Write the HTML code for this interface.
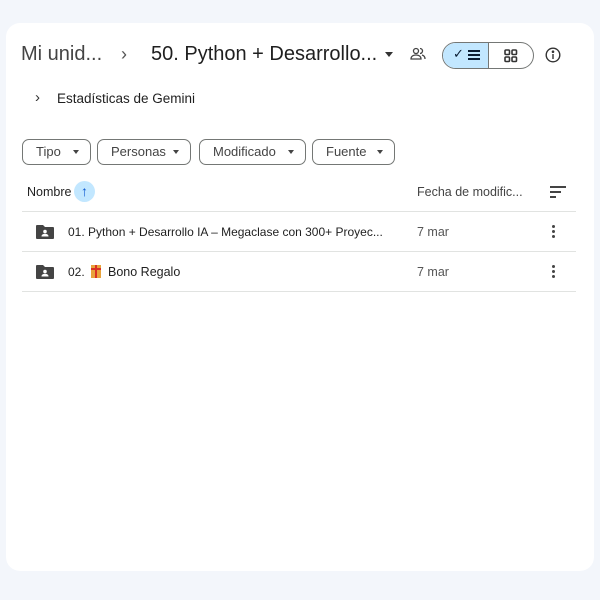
<!DOCTYPE html>
<html><head><style>
*{margin:0;padding:0;box-sizing:border-box}
body{width:600px;height:600px;background:#f3f6fb;font-family:"Liberation Sans",sans-serif;color:#1f1f1f;position:relative;overflow:hidden}
.card{position:absolute;left:6px;top:23px;width:588px;height:548px;background:#fff;border-radius:14px}
.a{position:absolute;white-space:nowrap}
.chip{position:absolute;top:139px;height:26px;border:1px solid #747775;border-radius:7px;font-size:13px;color:#444;line-height:24px;padding-left:13px}
.chip::after{content:"";position:absolute;right:11px;top:10px;border-left:3.5px solid transparent;border-right:3.5px solid transparent;border-top:4px solid #444}
.line{position:absolute;left:22px;width:554px;height:1px;background:#e1e3e1}
.dots{position:absolute;left:552px;width:3px;height:3px;background:#444;border-radius:50%;box-shadow:0 5px #444,0 -5px #444}
</style></head><body>
<div class="card"></div>
<div class="a" style="left:21px;top:43px;font-size:20px;color:#444">Mi unid...</div>
<div class="a" style="left:121px;top:44px;font-size:18px;color:#555">›</div>
<div class="a" style="left:151px;top:43px;font-size:20px;color:#1f1f1f">50. Python + Desarrollo...</div>
<div class="a" style="left:385px;top:52px;border-left:4px solid transparent;border-right:4px solid transparent;border-top:5px solid #333"></div>
<svg class="a" style="left:410px;top:47px" width="16" height="14" viewBox="0 0 16 14" fill="none" stroke="#444" stroke-width="1.3"><circle cx="6" cy="4" r="2.5"/><path d="M1 12c0-3 2.5-4 5-4s5 1 5 4z"/><path d="M10 1.5a2.5 2.5 0 010 5M12 8c2 .5 3 1.5 3 4"/></svg>
<div class="a" style="left:442px;top:42px;width:92px;height:27px;border:1px solid #747775;border-radius:14px;overflow:hidden">
<div style="position:absolute;left:0;top:0;width:46px;height:100%;background:#c2e7ff;border-right:1px solid #747775"></div>
<div style="position:absolute;left:10px;top:3px;font-size:13px;color:#0b1d33">✓</div>
<div style="position:absolute;left:25px;top:7px;width:12px;height:2px;background:#0b1d33;box-shadow:0 4px #0b1d33,0 8px #0b1d33"></div>
<svg style="position:absolute;left:61px;top:6px" width="14" height="14" viewBox="0 0 14 14" fill="none" stroke="#333" stroke-width="1.6"><rect x="1" y="1" width="4.5" height="4.5" rx="1"/><rect x="8" y="1" width="4.5" height="4.5" rx="1"/><rect x="1" y="8" width="4.5" height="4.5" rx="1"/><rect x="8" y="8" width="4.5" height="4.5" rx="1"/></svg>
</div>
<svg class="a" style="left:545px;top:47px" width="16" height="16" viewBox="0 0 16 16" fill="none" stroke="#333" stroke-width="1.4"><circle cx="8" cy="8" r="6.8"/><path d="M8 7v5"/><circle cx="8" cy="4.7" r=".6" fill="#333"/></svg>
<div class="a" style="left:35px;top:89px;font-size:15px;color:#333">›</div>
<div class="a" style="left:57px;top:91px;font-size:13.5px;color:#1f1f1f">Estadísticas de Gemini</div>
<div class="chip" style="left:22px;width:69px">Tipo</div>
<div class="chip" style="left:97px;width:94px">Personas</div>
<div class="chip" style="left:199px;width:107px">Modificado</div>
<div class="chip" style="left:312px;width:83px">Fuente</div>
<div class="a" style="left:27px;top:185px;font-size:12.5px;color:#1f1f1f">Nombre</div>
<div class="a" style="left:74px;top:181px;width:21px;height:21px;border-radius:50%;background:#c2e7ff;color:#0b57d0;font-size:14px;text-align:center;line-height:21px;font-weight:bold">↑</div>
<div class="a" style="left:417px;top:185px;font-size:12.5px;color:#444">Fecha de modific...</div>
<div class="a" style="left:550px;top:186px;width:16px;height:2px;background:#444"></div>
<div class="a" style="left:550px;top:191px;width:11px;height:2px;background:#444"></div>
<div class="a" style="left:550px;top:196px;width:6px;height:2px;background:#444"></div>
<div class="line" style="top:211px"></div>
<svg class="a" style="left:36px;top:224px" width="18" height="16" viewBox="0 0 18 16"><path d="M0 2a1 1 0 011-1h6l2 2h8a1 1 0 011 1v10a1 1 0 01-1 1H1a1 1 0 01-1-1z" fill="#444"/><circle cx="9" cy="7.5" r="1.8" fill="#fff"/><path d="M5.5 12.5c0-2 1.8-2.7 3.5-2.7s3.5.7 3.5 2.7z" fill="#fff"/></svg>
<div class="a" style="left:68px;top:225px;font-size:12px">01. Python + Desarrollo IA – Megaclase con 300+ Proyec...</div>
<div class="a" style="left:417px;top:225px;font-size:12.5px;color:#555">7 mar</div>
<div class="dots" style="top:230px"></div>
<div class="line" style="top:251px"></div>
<svg class="a" style="left:36px;top:264px" width="18" height="16" viewBox="0 0 18 16"><path d="M0 2a1 1 0 011-1h6l2 2h8a1 1 0 011 1v10a1 1 0 01-1 1H1a1 1 0 01-1-1z" fill="#444"/><circle cx="9" cy="7.5" r="1.8" fill="#fff"/><path d="M5.5 12.5c0-2 1.8-2.7 3.5-2.7s3.5.7 3.5 2.7z" fill="#fff"/></svg>
<div class="a" style="left:68px;top:265px;font-size:12px">02.</div>
<div class="a" style="left:91px;top:265px;width:10px;height:13px;background:#e8a33c"><div style="position:absolute;left:4px;top:0;width:2px;height:13px;background:#d93025"></div><div style="position:absolute;left:0;top:3px;width:10px;height:2px;background:#d93025"></div></div>
<div class="a" style="left:108px;top:265px;font-size:12.5px">Bono Regalo</div>
<div class="a" style="left:417px;top:265px;font-size:12.5px;color:#555">7 mar</div>
<div class="dots" style="top:270px"></div>
<div class="line" style="top:291px"></div>
</body></html>
